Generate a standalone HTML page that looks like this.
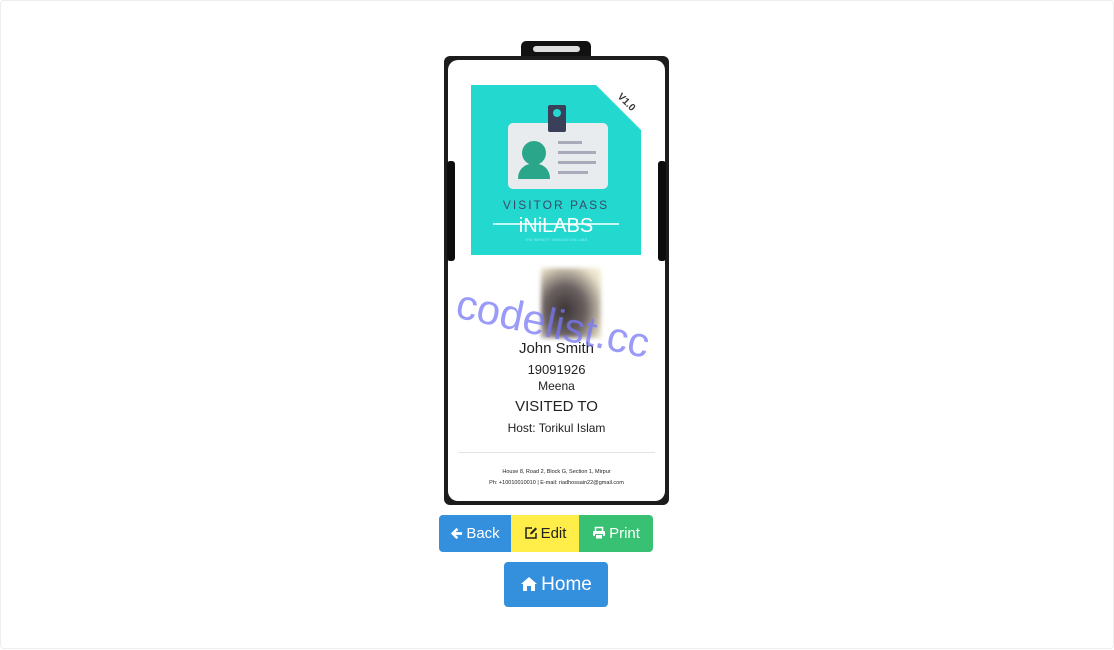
<!DOCTYPE html>
<html><head><style>
*{margin:0;padding:0;box-sizing:border-box}
body{width:1114px;height:650px;background:#fff;position:relative;font-family:"Liberation Sans",sans-serif;overflow:hidden}
.frame{position:absolute;left:0;top:0;width:1114px;height:649px;border:1px solid #eee;border-radius:4px}
.a{position:absolute}
.t{position:absolute;left:444px;width:225px;text-align:center;color:#222}
.btn{position:absolute;top:515px;height:37px;color:#fff;font-size:15px;line-height:37px;text-align:center}
.btn svg,.hb svg{vertical-align:-2px;margin-right:3px}
</style></head><body>
<div class="frame"></div>
<div class="a" style="left:521px;top:41px;width:70px;height:18px;background:#111;border-radius:5px 5px 0 0"></div>
<div class="a" style="left:533px;top:46px;width:47px;height:6px;background:#ddd;border-radius:3px"></div>
<div class="a" style="left:444px;top:56px;width:225px;height:449px;background:#1c1c1c;border-radius:6px"></div>
<div class="a" style="left:448px;top:60px;width:217px;height:441px;background:#fff;border-radius:10px"></div>
<div class="a" style="left:447px;top:161px;width:8px;height:100px;background:#0d0d0d;border-radius:3px"></div>
<div class="a" style="left:658px;top:161px;width:8px;height:100px;background:#0d0d0d;border-radius:3px"></div>
<svg class="a" style="left:471px;top:85px" width="170" height="170" viewBox="0 0 170 170">
<rect width="170" height="170" fill="#22d8cf"/>
<polygon points="125,0 170,0 170,45" fill="#fff"/>
<text x="146" y="12" font-size="10" font-weight="bold" fill="#333" transform="rotate(45 146 12)" font-family="Liberation Sans">V1.0</text>
<rect x="37" y="38" width="100" height="66" rx="5" fill="#e8ecee"/>
<rect x="77" y="20" width="18" height="27" rx="2" fill="#3a3f5a"/>
<circle cx="86" cy="28" r="4" fill="#22d8cf"/>
<circle cx="63" cy="68" r="12" fill="#2aa68a"/>
<path d="M47 94 Q47 80 63 78 Q79 80 79 94 Z" fill="#2aa68a"/>
<rect x="87" y="56" width="24" height="3" fill="#aab"/>
<rect x="87" y="66" width="38" height="3" fill="#aab"/>
<rect x="87" y="76" width="38" height="3" fill="#aab"/>
<rect x="87" y="86" width="30" height="3" fill="#aab"/>
<text x="85" y="124" text-anchor="middle" font-size="12" fill="#3a4a6a" letter-spacing="2" font-family="Liberation Sans">VISITOR PASS</text>
<line x1="22" y1="139" x2="148" y2="139" stroke="#fff" stroke-width="1.5"/>
<text x="85" y="147" text-anchor="middle" font-size="20" fill="#fff" font-family="Liberation Sans">iNiLABS</text>
<text x="85" y="156" text-anchor="middle" font-size="4" fill="#8ee">THE INFINITY INNOVATION LABS</text>
</svg>
<div class="a" style="left:541px;top:268px;width:60px;height:70px;background:radial-gradient(ellipse at 40% 60%,#3b3535 0%,#6a6060 40%,#e8e0c8 80%,#fbf7e0 100%);filter:blur(2px)"></div>
<div class="t" style="top:340px;font-size:15px">John Smith</div>
<div class="t" style="top:362px;font-size:13px">19091926</div>
<div class="t" style="top:379px;font-size:12px">Meena</div>
<div class="t" style="top:398px;font-size:15px">VISITED TO</div>
<div class="t" style="top:421px;font-size:12px">Host: Torikul Islam</div>
<div class="a" style="left:458px;top:452px;width:197px;height:1px;background:#e2e2e2"></div>
<div class="t" style="top:469px;font-size:5.5px">House 8, Road 2, Block G, Section 1, Mirpur</div>
<div class="t" style="top:480px;font-size:5.5px">Ph: +10010010010 | E-mail: riadhossain22@gmail.com</div>
<div class="a" style="left:462px;top:280px;font-size:42px;color:rgba(120,120,245,0.75);transform:rotate(12deg);transform-origin:left top;white-space:nowrap">codelist.cc</div>
<div class="btn" style="left:439px;width:72px;background:#3490dc;border-radius:4px 0 0 4px"><svg width="13" height="13" viewBox="0 0 14 14"><path d="M1 7 L7 1 L9 3 L6 5.5 L13 5.5 L13 8.5 L6 8.5 L9 11 L7 13 Z" fill="#fff"/></svg>Back</div>
<div class="btn" style="left:511px;width:68px;background:#ffed4a;color:#222"><svg width="14" height="14" viewBox="0 0 14 14"><path d="M8 2 H2 V12 H12 V7" fill="none" stroke="#222" stroke-width="1.5"/><path d="M6 8.5 L6.5 6.5 L11.5 1.5 L13 3 L8 8 Z" fill="#222"/></svg>Edit</div>
<div class="btn" style="left:579px;width:74px;background:#38c172;border-radius:0 4px 4px 0"><svg width="14" height="14" viewBox="0 0 14 14"><path d="M3.5 5 V1.5 H10.5 V5" fill="none" stroke="#fff" stroke-width="1.5"/><rect x="1" y="5" width="12" height="5" rx="1" fill="#fff"/><rect x="3.5" y="8.5" width="7" height="4.5" fill="#fff" stroke="#38c172" stroke-width="1"/></svg>Print</div>
<div class="a hb" style="left:504px;top:562px;width:104px;height:45px;background:#3490dc;border-radius:4px;color:#fff;font-size:19px;line-height:45px;text-align:center"><svg width="18" height="16" viewBox="0 0 18 16"><path d="M9 1 L1 8 L3 8 L3 15 L7 15 L7 10 L11 10 L11 15 L15 15 L15 8 L17 8 Z" fill="#fff"/></svg>Home</div>
</body></html>
